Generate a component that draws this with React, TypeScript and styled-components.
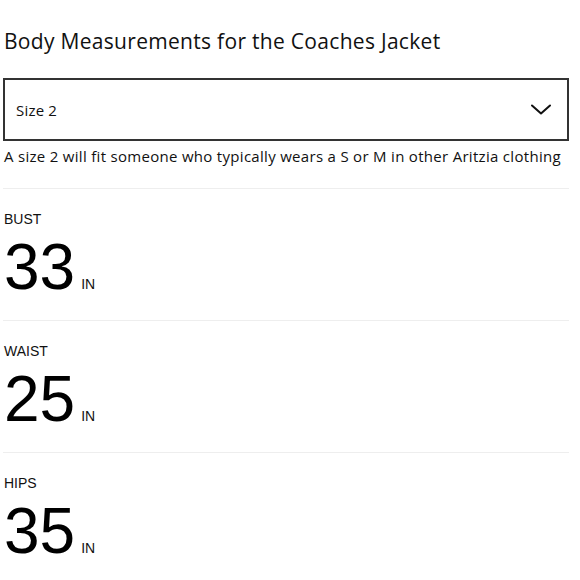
import React from "react";
import styled, { createGlobalStyle } from "styled-components";

const Global = createGlobalStyle`
  html, body { margin: 0; padding: 0; background: #fff; }
  body { font-family: "Open Sans", "Liberation Sans", sans-serif; color: #111; }
`;

const Page = styled.div`
  width: 566px;
  margin-left: 3px;
  padding-top: 27px;
`;

const Title = styled.h1`
  margin: 0;
  font-family: "Open Sans", sans-serif;
  font-weight: 400;
  font-size: 21px;
  line-height: 28px;
  letter-spacing: 0.3px;
  color: #111;
  padding-left: 1px;
`;

const SelectBox = styled.div`
  margin-top: 23px;
  height: 63px;
  box-sizing: border-box;
  border: 2px solid #333;
  display: flex;
  align-items: center;
  justify-content: space-between;
  padding: 0 16px 0 11px;
`;

const SelectText = styled.span`
  font-family: "Open Sans", sans-serif;
  font-size: 15px;
  letter-spacing: 0.2px;
  color: #111;
`;

const Hint = styled.p`
  margin: 5px 0 0;
  padding-left: 1px;
  font-family: "Open Sans", sans-serif;
  font-size: 15px;
  line-height: 20px;
  letter-spacing: 0.3px;
  color: #111;
  white-space: nowrap;
`;

const List = styled.div`
  margin-top: 22px;
`;

const Section = styled.section`
  border-top: 1px solid #eeeeee;
  padding: 22px 0 21px 1px;
`;

const Label = styled.div`
  font-family: "Liberation Sans", Arial, sans-serif;
  font-size: 14px;
  line-height: 16px;
  color: #111;
`;

const ValueRow = styled.div`
  margin-top: 8px;
  display: flex;
  align-items: baseline;
  gap: 6px;
`;

const Number = styled.span`
  font-family: "Liberation Sans", Arial, sans-serif;
  font-size: 64px;
  line-height: 64px;
  color: #000;
`;

const Unit = styled.span`
  font-family: "Liberation Sans", Arial, sans-serif;
  font-size: 14px;
  line-height: 16px;
  color: #111;
`;

const Chevron = () => (
  <svg width="20" height="11" viewBox="0 0 20 11" fill="none">
    <polyline points="1,1.5 10,9.5 19,1.5" stroke="#111" strokeWidth="2" strokeLinecap="round" strokeLinejoin="round" />
  </svg>
);

const measurements = [
  { label: "BUST", value: "33" },
  { label: "WAIST", value: "25" },
  { label: "HIPS", value: "35" },
];

export default function App() {
  return (
    <>
      <Global />
      <Page>
        <Title>Body Measurements for the Coaches Jacket</Title>
        <SelectBox>
          <SelectText>Size 2</SelectText>
          <Chevron />
        </SelectBox>
        <Hint>A size 2 will fit someone who typically wears a S or M in other Aritzia clothing</Hint>
        <List>
          {measurements.map((m) => (
            <Section key={m.label}>
              <Label>{m.label}</Label>
              <ValueRow>
                <Number>{m.value}</Number>
                <Unit>IN</Unit>
              </ValueRow>
            </Section>
          ))}
        </List>
      </Page>
    </>
  );
}
